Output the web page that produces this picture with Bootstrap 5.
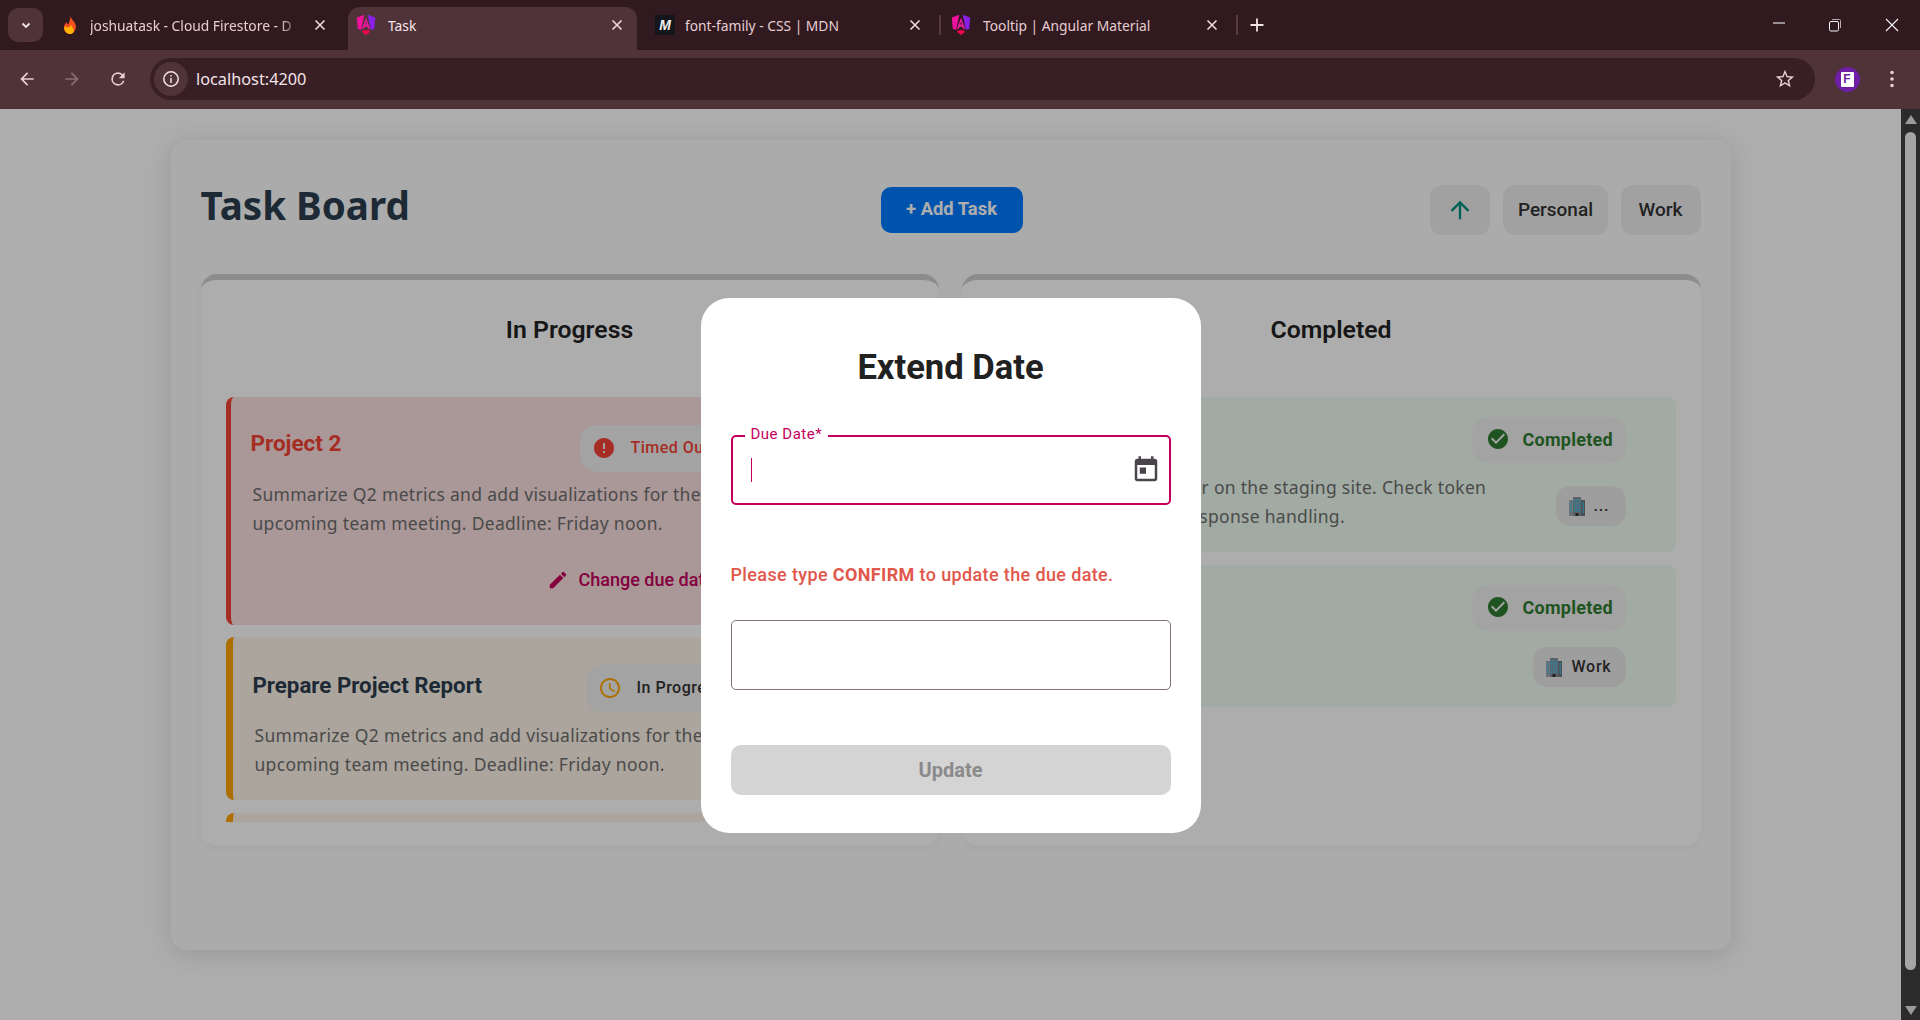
<!DOCTYPE html>
<html lang="en">
<head>
  <meta charset="UTF-8">
  <title>Task</title>
  <meta name="viewport" content="width=device-width, initial-scale=1">
  <link href="https://cdn.jsdelivr.net/npm/bootstrap@5.3.0/dist/css/bootstrap.min.css" rel="stylesheet">
  <style>
    html, body { height: 100%; overflow: hidden; }
    body { font-family: Roboto, "Liberation Sans", sans-serif; background: #fff; color: #212121; }

    /* browser chrome */
    .tab-strip { height: 50px; background: #301a20; color: #e8cdd2; font: 13.8px "Noto Sans", sans-serif; }
    .tab-list-btn { width: 35px; height: 34px; margin: 8px 0 0 8px; border-radius: 10px; background: #4f3339; flex: none; }
    .tab-item { height: 43px; margin-top: 7px; padding-bottom: 7px; border-radius: 12px 12px 0 0; flex: none; }
    .tab-item.active-tab { background: #4f3339; color: #f6e6e9; }
    .tab-title { overflow: hidden; white-space: nowrap; flex: 1 1 auto; }
    .tab-fade { -webkit-mask-image: linear-gradient(to right, #000 88%, transparent 98%); mask-image: linear-gradient(to right, #000 88%, transparent 98%); }
    .tab-fav { width: 20px; height: 20px; flex: none; margin-right: 10px; }
    .ng-fav { width: 22px; height: 22px; margin-right: 11px; }
    .tab-close { width: 12px; height: 12px; flex: none; }
    .tab-one { width: 305px; padding-left: 17px; padding-right: 22px; }
    .tab-two { width: 289px; padding-left: 7px; padding-right: 14px; }
    .tab-three { width: 302px; padding-left: 18px; padding-right: 18px; }
    .tab-four { width: 295px; padding-left: 9px; padding-right: 18px; }
    .mdn-fav { background: #14161b; color: #f1f1f1; font: italic 700 14px/20px "Liberation Sans", sans-serif; text-align: center; }
    .tab-sep { width: 2px; height: 20px; background: #573b41; margin-top: 15px; flex: none; }
    .new-tab { margin: 17px 0 0 11px; }
    .win-btn { width: 56.5px; height: 50px; }
    .toolbar { height: 59px; background: #4f3339; border-bottom: 1px solid #49303a; padding: 8px 5px 0 4px; }
    .tool-btn { width: 45.5px; height: 42px; flex: none; }
    .addr-bar { height: 42px; flex: 1 1 auto; background: #381f26; border-radius: 21px; color: #f3e4e6; font: 16.3px "Noto Sans", sans-serif; margin: 0 20px 0 9.5px; }
    .addr-info { width: 34px; height: 34px; border-radius: 50%; background: #4f3339; margin: 0 8px 0 4px; }
    .addr-star { margin-right: 19px; }
    .ext-dot { width: 25px; height: 25px; border-radius: 50%; background: #6f1fa6; margin: 8.5px 10px 0 0; flex: none; }
    .ext-mark { width: 13px; height: 15px; background: #fff; color: #6f1fa6; font: 700 12px/15px "Liberation Sans", sans-serif; text-align: center; border-radius: 1px; }

    /* page */
    .page-area { height: 911px; }
    .page-scroll { flex: 1 1 auto; padding-top: 31px; }
    .scroll-track { width: 19px; background: #2b2b2b; flex: none; }
    .scroll-up { width: 0; height: 0; border: 6.5px solid transparent; border-top: 0; border-bottom: 9px solid #9a9a9a; margin: 6px auto 0; }
    .scroll-down { width: 0; height: 0; border: 6.5px solid transparent; border-bottom: 0; border-top: 9px solid #9a9a9a; margin: 0 auto 5px; }
    .scroll-thumb { width: 11px; flex: 1 1 auto; margin: 8px auto 36px; background: #a5a5a5; border-radius: 6px; }

    .board { width: 1560px; height: 810px; margin: 0 auto; padding: 30px; background: #fdfdfd; border-radius: 16px; box-shadow: 0 4px 24px rgba(0,0,0,.12); }
    .board-head { height: 104px; }
    .board-title { width: 680px; font: 700 38.6px/56px "Noto Sans", sans-serif; color: #2c3e50; margin: 0; padding-top: 7px; }
    .add-btn { width: 142px; height: 46px; margin-top: 17px; padding: 0 0 3px; border: 0; border-radius: 10px; background: #007bff; color: #fff; font-weight: 700; font-size: 18.4px; }
    .filter-gap { gap: 13px; }
    .filter-btn { height: 50px; margin-top: 15px; padding: 0 14.5px; border: 0; border-radius: 12px; background: #eee; color: #333; font-weight: 500; font-size: 19px; }
    .filter-arrow { width: 60px; padding: 0; }
    .filter-work { width: 80px; padding: 0; }
    .task-col { height: 572px; padding: 0 25px; background: #fff; border-top: 6px solid #cfcfcf; border-radius: 16px; box-shadow: 0 2px 10px rgba(0,0,0,.05); }
    .col-left { width: 738px; }
    .col-right { width: 739px; }
    .col-title { height: 117px; margin: 0; padding-top: 32px; font: 600 24.8px/36px Roboto, sans-serif; color: #222; text-align: center; }
    .col-list { height: 425px; overflow: hidden; }
    .task-box { width: 689px; margin-bottom: 12px; border-radius: 8px; flex: none; }
    .box-red { height: 228px; background: #fbdfdf; border-left: 5px solid #f44336; padding: 28px 0 0 20px; }
    .box-amber { height: 163px; background: #fdf3e8; border-left: 7px solid #ffa500; padding: 28px 0 0 20px; margin-bottom: 13px; }
    .box-green { background: #eefdf0; padding: 20px 50px 0 27px; }
    .box-green-a { height: 155px; margin-bottom: 13px; }
    .box-green-b { height: 142px; }
    .box-head { height: 47px; }
    .box-name { width: 333px; margin: 0; padding-top: 3px; font: 700 22.3px/34px Roboto, sans-serif; color: #2c3e50; }
    .box-red .box-name { width: 329px; padding-top: 1px; font-size: 22.5px; color: #f44336; }
    .box-desc { width: 480px; margin: 0; font: 400 17.5px/29px "Noto Sans", sans-serif; letter-spacing: .3px; color: #6e6e6e; }
    .box-red .box-desc { margin: 8px 0 0 2px; }
    .box-amber .box-desc { margin: 9px 0 0 2px; }
    .box-green .box-desc { flex: none; margin: 56px -30px 0 2px; }
    .status-chip { height: 47px; padding: 0 14px 2px 12px; border-radius: 16px; background: #f0f0f0; font-size: 16px; font-weight: 500; letter-spacing: .5px; white-space: nowrap; gap: 15px; }
    .status-chip svg { width: 24px; height: 24px; flex: none; }
    .chip-red { color: #f44336; }
    .chip-amber { color: #333; }
    .chip-amber svg { fill: #ffa500; }
    .chip-green { color: #2e7d32; font-size: 18px; font-weight: 700; letter-spacing: .25px; height: 46px; width: 154px; padding-left: 14px; gap: 13px; }
    .tag-chip { height: 40px; min-width: 70px; padding: 0 14px 0 12px; border-radius: 14px; background: #ebe9eb; color: #333; font-size: 16px; font-weight: 500; letter-spacing: .8px; gap: 8px; }
    .tag-chip svg { width: 18px; height: 20px; }
    .stack-a { gap: 23px; }
    .stack-b { gap: 16px; }
    .due-link { margin: 28px 0 0 296px; color: #c4005c; font-size: 18px; font-weight: 500; gap: 10px; white-space: nowrap; }
    .due-link svg { width: 22px; height: 22px; fill: #c4005c; }

    /* dialog */
    .dim-layer { position: absolute; inset: 0 19px 0 0; background: rgba(0,0,0,.32); }
    .date-dialog { width: 500px; height: 535px; margin-top: 2px; padding: 0 30px; background: #fff; border-radius: 28px; }
    .date-dialog h2 { margin: 0; padding-top: 44px; height: 137px; font: 700 34.6px/50px Roboto, sans-serif; text-align: center; color: #212121; }
    .due-field { height: 70px; border: 2px solid #c4005c; border-radius: 5px; padding: 0 8px 0 18px; }
    .due-label { position: absolute; top: -12px; left: 12px; padding: 0 6px; background: #fff; color: #c4005c; font-size: 15px; line-height: 18px; letter-spacing: .5px; }
    .caret-line { width: 1px; height: 24px; background: #c4005c; }
    .due-field svg { width: 30px; height: 30px; fill: #49454b; }
    .confirm-note { margin: 57px 0 0; color: #e2574c; font-size: 18px; line-height: 26px; font-weight: 500; letter-spacing: .37px; }
    .confirm-note b { font-weight: 700; }
    .confirm-input { height: 70px; margin-top: 32px; border: 1px solid #81717a; border-radius: 5px; }
    .update-btn { width: 100%; height: 50px; margin-top: 55px; border: 0; border-radius: 10px; background: #d4d4d4; color: #8a8a8a; font-size: 20px; font-weight: 700; }
  </style>
</head>
<body>
  <svg width="0" height="0" class="d-block">
    <defs>
      <symbol id="ng-logo" viewBox="0 0 24 24">
        <path fill="#f0129c" d="M10.2.8 2 3.800 3 16l3.600 1.500z"/>
        <path fill="#8a1fe8" d="M13.800.8 22 3.800 21 16l-3.600 1.500z"/>
        <path fill="#ee1aa0" fill-rule="evenodd" d="M12 4 7.500 16h2.200l.8-2.200h3l.8 2.200h2.200zm0 4.500-1 3h2z"/>
        <path fill="#f2054f" d="M8.500 17.800h7l.8 1.700L12 23l-4.300-3.500z"/>
      </symbol>
      <symbol id="x-mark" viewBox="0 0 12 12"><path d="M1.500 1.500l9 9m0-9l-9 9" stroke="#efd9dc" stroke-width="1.600" fill="none"/></symbol>
      <symbol id="ic-check" viewBox="0 0 24 24"><path fill="#2e7d32" d="M12 2C6.480 2 2 6.480 2 12s4.480 10 10 10 10-4.480 10-10S17.520 2 12 2zm-2 15l-5-5 1.410-1.410L10 14.170l7.590-7.590L19 8l-9 9z"/></symbol>
      <symbol id="ic-building" viewBox="0 0 18 20">
        <rect x="5" y="1" width="8" height="19" fill="#8a8f98"/><rect x="1" y="4" width="4" height="16" fill="#a2a6ad"/><rect x="13" y="4" width="4" height="16" fill="#72767e"/>
        <path d="M6.500 3v13M9 3v13M11.500 3v13M2.700 6v11M15.200 6v11" stroke="#3cc8f0" stroke-width="1.500" stroke-dasharray="1.500 .8"/>
        <rect x="7.500" y="17" width="3" height="3" fill="#333"/>
      </symbol>
    </defs>
  </svg>

  <header>
    <div class="tab-strip d-flex">
      <div class="tab-list-btn d-flex align-items-center justify-content-center">
        <svg width="12" height="12" viewBox="0 0 12 12"><path d="M2.500 4.500 6 8l3.500-3.500" stroke="#f3e4e6" stroke-width="1.800" fill="none"/></svg>
      </div>
      <div class="tab-item tab-one d-flex align-items-center">
        <svg class="tab-fav" viewBox="0 0 20 20">
          <path fill="#f4511e" d="M10 1c1 3 5 5.600 5.800 9.600C16.400 15 13.500 19 10 19S3.500 16 4 12c.3-2.500 1.600-3.200 2.200-4.800C7.200 8.200 7.800 9 8 10c1.500-3 2.700-6 2-9z"/>
          <path fill="#ffb300" d="M4.300 11.500C3.800 15.500 6.700 19 10 19c2.700 0 4.300-2 3.600-4.500-.5-1.800-1.900-3-2.600-4.500-.8 1.500-1.500 2.500-3 2.500-1.500 0-2.500-.8-3.700-1z"/>
        </svg>
        <span class="tab-title tab-fade">joshuatask - Cloud Firestore - D</span>
        <svg class="tab-close ms-2"><use href="#x-mark"/></svg>
      </div>
      <div class="tab-item tab-two active-tab d-flex align-items-center">
        <svg class="tab-fav ng-fav"><use href="#ng-logo"/></svg>
        <span class="tab-title">Task</span>
        <svg class="tab-close"><use href="#x-mark"/></svg>
      </div>
      <div class="tab-item tab-three d-flex align-items-center">
        <span class="tab-fav mdn-fav">M</span>
        <span class="tab-title">font-family - CSS | MDN</span>
        <svg class="tab-close"><use href="#x-mark"/></svg>
      </div>
      <div class="tab-sep"></div>
      <div class="tab-item tab-four d-flex align-items-center">
        <svg class="tab-fav ng-fav"><use href="#ng-logo"/></svg>
        <span class="tab-title">Tooltip | Angular Material</span>
        <svg class="tab-close"><use href="#x-mark"/></svg>
      </div>
      <div class="tab-sep"></div>
      <svg class="new-tab" width="16" height="16" viewBox="0 0 16 16"><path d="M8 1.500v13M1.500 8h13" stroke="#f3e4e6" stroke-width="1.800"/></svg>
      <div class="d-flex ms-auto">
        <div class="win-btn d-flex align-items-center justify-content-center"><svg width="14" height="14" viewBox="0 0 14 14"><path d="M1 5h12" stroke="#f3f3f3" stroke-width="1.100"/></svg></div>
        <div class="win-btn d-flex align-items-center justify-content-center"><svg width="14" height="14" viewBox="0 0 14 14" fill="none" stroke="#f3f3f3"><rect x="1.500" y="3.500" width="9" height="9.500" rx="1.500"/><path d="M4 1.500h7.500a1 1 0 0 1 1 1V10" stroke="#b9a8ac"/></svg></div>
        <div class="win-btn d-flex align-items-center justify-content-center"><svg width="14" height="14" viewBox="0 0 14 14"><path d="M1 1l12 12m0-12L1 13" stroke="#f3f3f3" stroke-width="1.100"/></svg></div>
      </div>
    </div>
    <div class="toolbar d-flex">
      <div class="tool-btn d-flex align-items-center justify-content-center"><svg width="20" height="20" viewBox="0 0 24 24"><path fill="#e8cdd2" d="M20 11H7.830l5.590-5.590L12 4l-8 8 8 8 1.410-1.410L7.830 13H20z"/></svg></div>
      <div class="tool-btn d-flex align-items-center justify-content-center"><svg width="20" height="20" viewBox="0 0 24 24"><path fill="#8a6f75" d="M4 11h12.170l-5.590-5.590L12 4l8 8-8 8-1.410-1.410L16.170 13H4z"/></svg></div>
      <div class="tool-btn d-flex align-items-center justify-content-center"><svg width="20" height="20" viewBox="0 0 24 24"><path fill="#e8cdd2" d="M17.650 6.350A7.960 7.960 0 0 0 12 4a8 8 0 1 0 7.730 10h-2.080A6 6 0 1 1 12 6c1.660 0 3.140.69 4.220 1.780L13 11h7V4z"/></svg></div>
      <div class="addr-bar d-flex align-items-center">
        <div class="addr-info d-flex align-items-center justify-content-center"><svg width="18" height="18" viewBox="0 0 18 18" fill="none" stroke="#f3e4e6" stroke-width="1.500"><circle cx="9" cy="9" r="7.200"/><path d="M9 8v5M9 5v1.500"/></svg></div>
        <span>localhost:4200</span>
        <svg class="addr-star ms-auto" width="22" height="22" viewBox="0 0 24 24"><path fill="#e8cdd2" d="M22 9.240l-7.190-.62L12 2 9.190 8.630 2 9.240l5.460 4.730L5.820 21 12 17.270 18.180 21l-1.630-7.030L22 9.240zM12 15.400l-3.760 2.270 1-4.280-3.320-2.880 4.380-.38L12 6.100l1.710 4.040 4.380.38-3.320 2.880 1 4.280L12 15.400z"/></svg>
      </div>
      <div class="ext-dot d-flex align-items-center justify-content-center"><span class="ext-mark">F</span></div>
      <div class="tool-btn d-flex align-items-center justify-content-center"><svg width="16" height="20" viewBox="0 0 16 20" fill="#e8cdd2"><circle cx="8" cy="3.500" r="1.800"/><circle cx="8" cy="10" r="1.800"/><circle cx="8" cy="16.500" r="1.800"/></svg></div>
    </div>
  </header>

  <div class="page-area d-flex position-relative">
    <main class="page-scroll">
      <section class="board">
        <div class="board-head d-flex">
          <h1 class="board-title">Task Board</h1>
          <button class="add-btn" type="button">+ Add Task</button>
          <div class="filter-gap d-flex ms-auto">
            <button class="filter-btn filter-arrow" type="button"><svg width="28" height="28" viewBox="0 0 24 24"><path fill="#00917c" d="M4 12l1.410 1.410L11 7.830V20h2V7.830l5.580 5.590L20 12l-8-8-8 8z"/></svg></button>
            <button class="filter-btn" type="button">Personal</button>
            <button class="filter-btn filter-work" type="button">Work</button>
          </div>
        </div>
        <div class="d-flex justify-content-between">
          <div class="task-col col-left">
            <h3 class="col-title">In Progress</h3>
            <div class="col-list d-flex flex-column">
              <article class="task-box box-red">
                <div class="box-head d-flex align-items-start">
                  <h4 class="box-name">Project 2</h4>
                  <span class="status-chip chip-red d-inline-flex align-items-center">
                    <svg viewBox="0 0 24 24" fill="#f44336"><path d="M12 2C6.480 2 2 6.480 2 12s4.480 10 10 10 10-4.480 10-10S17.520 2 12 2zm1 15h-2v-2h2v2zm0-4h-2V7h2v6z"/></svg>
                    Timed Out
                  </span>
                </div>
                <p class="box-desc">Summarize Q2 metrics and add visualizations for the upcoming team meeting. Deadline: Friday noon.</p>
                <div class="due-link d-flex align-items-center">
                  <svg viewBox="0 0 24 24"><path d="M3 17.250V21h3.750L17.810 9.940l-3.750-3.750L3 17.250zM20.710 7.040c.39-.39.39-1.020 0-1.410l-2.340-2.340c-.39-.39-1.020-.39-1.410 0l-1.830 1.830 3.750 3.750 1.830-1.830z"/></svg>
                  Change due date
                </div>
              </article>
              <article class="task-box box-amber">
                <div class="box-head d-flex align-items-start">
                  <h4 class="box-name">Prepare Project Report</h4>
                  <span class="status-chip chip-amber d-inline-flex align-items-center">
                    <svg viewBox="0 0 24 24"><path d="M11.990 2C6.470 2 2 6.480 2 12s4.470 10 9.990 10C17.520 22 22 17.520 22 12S17.520 2 11.990 2zM12 20c-4.420 0-8-3.580-8-8s3.580-8 8-8 8 3.580 8 8-3.580 8-8 8zm.5-13H11v6l5.250 3.150.75-1.230-4.500-2.670z"/></svg>
                    In Progress
                  </span>
                </div>
                <p class="box-desc">Summarize Q2 metrics and add visualizations for the upcoming team meeting. Deadline: Friday noon.</p>
              </article>
              <article class="task-box box-amber"></article>
            </div>
          </div>
          <div class="task-col col-right">
            <h3 class="col-title">Completed</h3>
            <div class="col-list d-flex flex-column">
              <article class="task-box box-green box-green-a d-flex justify-content-between">
                <p class="box-desc">Resolve the login error on the staging site. Check token expiration, and API response handling.</p>
                <div class="stack-a d-flex flex-column align-items-end">
                  <span class="status-chip chip-green d-inline-flex align-items-center"><svg><use href="#ic-check"/></svg>Completed</span>
                  <span class="tag-chip d-inline-flex align-items-center"><svg><use href="#ic-building"/></svg>...</span>
                </div>
              </article>
              <article class="task-box box-green box-green-b d-flex justify-content-end">
                <div class="stack-b d-flex flex-column align-items-end">
                  <span class="status-chip chip-green d-inline-flex align-items-center"><svg><use href="#ic-check"/></svg>Completed</span>
                  <span class="tag-chip d-inline-flex align-items-center"><svg><use href="#ic-building"/></svg>Work</span>
                </div>
              </article>
            </div>
          </div>
        </div>
      </section>
    </main>
    <aside class="scroll-track d-flex flex-column">
      <div class="scroll-up"></div>
      <div class="scroll-thumb"></div>
      <div class="scroll-down"></div>
    </aside>
    <div class="dim-layer d-flex align-items-center justify-content-center">
      <form class="date-dialog">
        <h2>Extend Date</h2>
        <div class="due-field position-relative d-flex align-items-center justify-content-between">
          <span class="due-label">Due Date*</span>
          <span class="caret-line"></span>
          <svg viewBox="0 0 24 24"><path d="M19 3h-1V1h-2v2H8V1H6v2H5c-1.110 0-1.990.9-1.990 2L3 19c0 1.100.89 2 2 2h14c1.100 0 2-.9 2-2V5c0-1.100-.9-2-2-2zm0 16H5V8h14v11zM7 10h5v5H7z"/></svg>
        </div>
        <p class="confirm-note">Please type <b>CONFIRM</b> to update the due date.</p>
        <div class="confirm-input"></div>
        <button class="update-btn" type="button" disabled>Update</button>
      </form>
    </div>
  </div>
</body>
</html>
